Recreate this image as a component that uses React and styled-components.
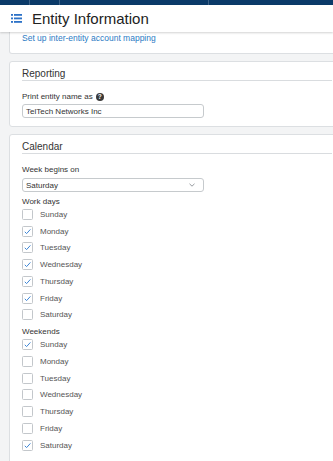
import styled, { createGlobalStyle } from "styled-components";

const GlobalStyle = createGlobalStyle`
  html, body {
    margin: 0;
    padding: 0;
    background: #f3f4f5;
    font-family: "Liberation Sans", Arial, sans-serif;
    color: #333;
  }
`;

const WEEK = ["Sunday", "Monday", "Tuesday", "Wednesday", "Thursday", "Friday", "Saturday"];
const workDays = ["Monday", "Tuesday", "Wednesday", "Thursday", "Friday"];
const weekends = ["Sunday", "Saturday"];

const ListIcon = () => (
  <svg width="11" height="9" viewBox="0 0 11 9">
    {[0, 3.5, 7].map((y) => (
      <g key={y} fill="#2c72c7">
        <rect x="0" y={y} width="2" height="1.8" />
        <rect x="3" y={y} width="8" height="1.8" />
      </g>
    ))}
  </svg>
);

const Check = () => (
  <svg width="9" height="9" viewBox="0 0 9 9">
    <path d="M1.8 4.8 L3.6 6.6 L7.4 2.4" fill="none" stroke="#3d86d6" strokeWidth="1" />
  </svg>
);

const Chevron = () => (
  <svg width="6" height="4" viewBox="0 0 6 4">
    <path d="M0.5 0.8 L3 3.2 L5.5 0.8" fill="none" stroke="#8a8f94" strokeWidth="0.9" />
  </svg>
);

const DayList = ({ checked }) => (
  <Rows>
    {WEEK.map((d) => (
      <CheckRow key={d}>
        <Box>{checked.includes(d) && <Check />}</Box>
        <DayName>{d}</DayName>
      </CheckRow>
    ))}
  </Rows>
);

const App = () => {
  return (
    <Page>
      <GlobalStyle />
      <TopBar>
        <Divider $x={29} />
        <Divider $x={59} />
        <Divider $x={208} />
      </TopBar>
      <Header>
        <ListIcon />
        <Title>Entity Information</Title>
      </Header>
      <Content>
        <Card $clipped>
          <Link>Set up inter-entity account mapping</Link>
        </Card>

        <Card>
          <SectionTitle>Reporting</SectionTitle>
          <FieldLabel $mt={11}>
            Print entity name as <Help>?</Help>
          </FieldLabel>
          <TextInput>TelTech Networks Inc</TextInput>
        </Card>

        <Card $tall>
          <SectionTitle>Calendar</SectionTitle>
          <FieldLabel $mt={11}>Week begins on</FieldLabel>
          <Select>
            <span>Saturday</span>
            <Chevron />
          </Select>
          <GroupLabel $mt={6}>Work days</GroupLabel>
          <DayList checked={workDays} />
          <GroupLabel $mt={5}>Weekends</GroupLabel>
          <DayList checked={weekends} />
        </Card>
      </Content>
    </Page>
  );
};

export default App;

const Page = styled.div`
  width: 333px;
  height: 461px;
  overflow: hidden;
  background: #f3f4f5;
`;

const TopBar = styled.div`
  position: relative;
  height: 5px;
  background: #0b3a69;
`;

const Divider = styled.span`
  position: absolute;
  top: 0;
  bottom: 0;
  left: ${(p) => p.$x}px;
  width: 1px;
  background: #3d6288;
`;

const Header = styled.div`
  position: relative;
  z-index: 2;
  height: 27px;
  display: flex;
  align-items: center;
  gap: 10px;
  padding-left: 11px;
  background: #fff;
  box-shadow: 0 1px 2px rgba(0, 0, 0, 0.18);
`;

const Title = styled.h1`
  margin: 0;
  font-size: 15px;
  font-weight: 400;
  color: #222;
  line-height: 18px;
`;

const Content = styled.div`
  display: flex;
  flex-direction: column;
  gap: 7px;
  padding-left: 9px;
`;

const Card = styled.section`
  margin-right: -12px;
  background: #fff;
  border: 1px solid #dcdfe2;
  border-radius: 3px;
  padding: 6px 12px 8px 12px;
  ${(p) =>
    p.$clipped &&
    `
    border-top: none;
    border-radius: 0 0 3px 3px;
    padding-top: 1px;
    padding-bottom: 10px;
  `}
  ${(p) => p.$tall && `padding-bottom: 20px;`}
`;

const Link = styled.a`
  display: block;
  font-size: 8.5px;
  line-height: 10px;
  color: #2b7bc4;
  cursor: pointer;
`;

const SectionTitle = styled.h2`
  margin: 0;
  font-size: 10px;
  font-weight: 400;
  line-height: 12px;
  color: #333;
  border-bottom: 1px solid #d9dcdf;
`;

const FieldLabel = styled.div`
  margin-top: ${(p) => p.$mt || 0}px;
  display: flex;
  align-items: center;
  gap: 3px;
  font-size: 8px;
  line-height: 10px;
  color: #333;
`;

const GroupLabel = styled(FieldLabel)`
  line-height: 8px;
`;

const Help = styled.span`
  display: inline-flex;
  align-items: center;
  justify-content: center;
  width: 8px;
  height: 8px;
  border-radius: 50%;
  background: #3a3a3a;
  color: #fff;
  font-size: 6.5px;
  font-weight: 700;
  line-height: 1;
`;

const TextInput = styled.div`
  box-sizing: border-box;
  margin-top: 2px;
  width: 182px;
  height: 14px;
  display: flex;
  align-items: center;
  padding-left: 3px;
  border: 1px solid #c6cacd;
  border-radius: 3px;
  font-size: 8px;
  color: #333;
  background: #fff;
`;

const Select = styled(TextInput)`
  margin-top: 3px;
  justify-content: space-between;
  padding-right: 8px;
`;

const Rows = styled.div`
  display: flex;
  flex-direction: column;
`;

const CheckRow = styled.label`
  height: 16.75px;
  display: flex;
  align-items: center;
  gap: 7px;
`;

const Box = styled.span`
  box-sizing: border-box;
  width: 11px;
  height: 11px;
  display: flex;
  align-items: center;
  justify-content: center;
  border: 1px solid #c3c7cb;
  border-radius: 1.5px;
  background: #fff;
`;

const DayName = styled.span`
  font-size: 8px;
  color: #555;
`;
